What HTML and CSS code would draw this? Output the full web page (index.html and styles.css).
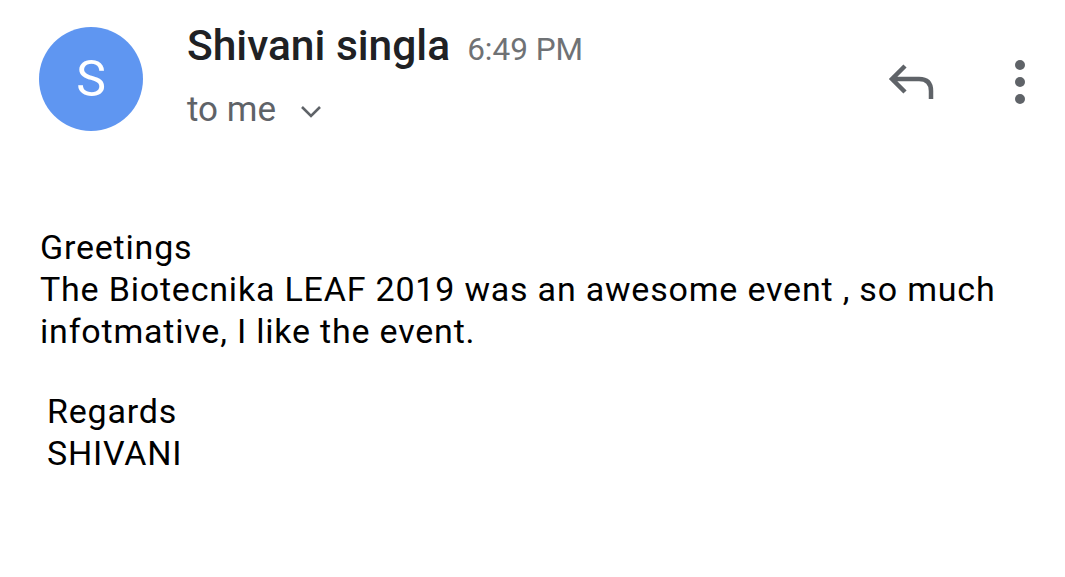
FILE: index.html
```html
<!DOCTYPE html>
<html lang="en">
<head>
  <meta charset="UTF-8" />
  <meta name="viewport" content="width=device-width, initial-scale=1.0" />
  <title>Shivani singla - Mail</title>
  <link rel="stylesheet" href="styles.css">
</head>
<body>
  <header class="mail-header">
    <div class="avatar">S</div>
    <div class="sender">
      <div class="sender-line">
        <span class="sender-name">Shivani singla</span>
        <span class="sender-time">6:49 PM</span>
      </div>
      <div class="recipient">
        to me
        <svg class="chevron" viewBox="0 0 22 14" width="22" height="14">
          <path d="M2 2 L11 11 L20 2" fill="none" stroke="#5f6368" stroke-width="2.6"/>
        </svg>
      </div>
    </div>
    <div class="actions">
      <svg class="reply" viewBox="0 0 48 40" width="48" height="40">
        <path d="M18 4 L5 17 L18 30 M5 17 H32 Q44 17 44 29 V37" fill="none" stroke="#5f6368" stroke-width="4.5"/>
      </svg>
      <div class="more">
        <span></span><span></span><span></span>
      </div>
    </div>
  </header>

  <main class="mail-body">
    <p>Greetings<br>
    The Biotecnika LEAF 2019 was an awesome event , so much infotmative, I like the event.</p>
    <p class="sign">Regards<br>SHIVANI</p>
  </main>
</body>
</html>
```

FILE: styles.css
```css
body {
  font-family: Roboto, "Noto Sans", Arial, sans-serif;
  background-color: #ffffff;
  margin: 0;
  color: #000000;
}

.mail-header {
  display: flex;
  align-items: flex-start;
  padding: 24px 40px 0 39px;
}

.avatar {
  width: 104px;
  height: 104px;
  margin-top: 3px;
  border-radius: 50%;
  background-color: #5f96f1;
  color: white;
  font-size: 50px;
  display: flex;
  align-items: center;
  justify-content: center;
  flex-shrink: 0;
}

.sender {
  margin-left: 44px;
  flex: 1;
}

.sender-line {
  display: flex;
  align-items: baseline;
  height: 44px;
  line-height: 44px;
}

.sender-name {
  font-size: 42.5px;
  font-weight: 500;
  color: #202124;
}

.sender-time {
  font-size: 31.5px;
  color: #6f7275;
  margin-left: 17px;
}

.recipient {
  font-size: 35px;
  line-height: 40px;
  color: #5f6368;
  margin-top: 22px;
  display: flex;
  align-items: center;
}

.chevron {
  margin-left: 24px;
  margin-top: 4px;
}

.actions {
  display: flex;
  align-items: center;
  margin-top: 36px;
}

.more {
  display: flex;
  flex-direction: column;
  gap: 7px;
  margin-left: 80px;
}

.more span {
  width: 10px;
  height: 10px;
  border-radius: 50%;
  background-color: #5f6368;
}

.mail-body {
  padding: 0 40px;
  margin-top: 95px;
  font-size: 34px;
  line-height: 42px;
  letter-spacing: 0.8px;
}

.mail-body p {
  margin: 0 0 38px;
}

.sign {
  padding-left: 7px;
}
```
